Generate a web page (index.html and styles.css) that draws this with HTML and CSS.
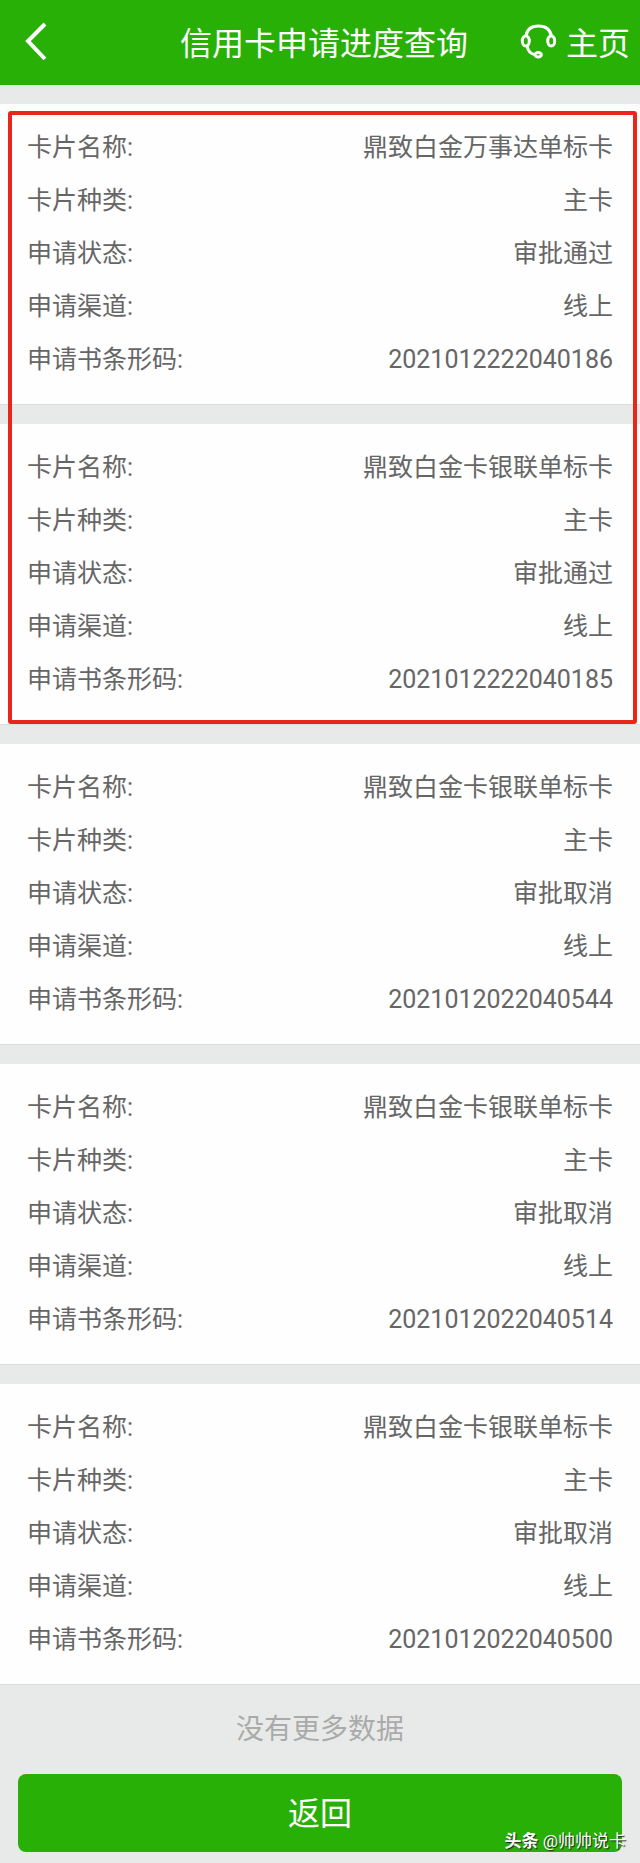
FILE: index.html
```html
<!DOCTYPE html>
<html lang="zh-CN">
<head>
    <meta charset="UTF-8">
    <meta name="viewport" content="width=device-width, initial-scale=1.0">
    <title>信用卡申请进度查询</title>
    <link rel="stylesheet" href="styles.css">
</head>
<body>
    <header class="header">
        <button class="back" type="button" aria-label="后退">
            <svg width="24" height="40" viewBox="0 0 24 40" fill="none" stroke="currentColor" stroke-width="4">
                <path d="M21 3 L4 20 L21 38"/>
            </svg>
        </button>
        <h1>信用卡申请进度查询</h1>
        <a class="home" href="#">
            <svg width="36" height="36" viewBox="0 0 36 36" fill="none" stroke="currentColor" stroke-width="3">
                <path d="M6 13 C7 6 12 3 18.5 3 C25 3 30 6 31.5 13"/>
                <ellipse cx="5.8" cy="18" rx="3.5" ry="5"/>
                <ellipse cx="31.2" cy="18" rx="3.5" ry="5"/>
                <path d="M7 23 C8 28 10 31 15 31.5"/>
                <ellipse cx="18.2" cy="31.8" rx="3.2" ry="2.2"/>
            </svg>
            主页
        </a>
    </header>

    <main class="list">
        <div class="marked">
            <dl class="card">
                <div class="row"><dt>卡片名称:</dt><dd>鼎致白金万事达单标卡</dd></div>
                <div class="row"><dt>卡片种类:</dt><dd>主卡</dd></div>
                <div class="row"><dt>申请状态:</dt><dd>审批通过</dd></div>
                <div class="row"><dt>申请渠道:</dt><dd>线上</dd></div>
                <div class="row"><dt>申请书条形码:</dt><dd>2021012222040186</dd></div>
            </dl>
            <dl class="card">
                <div class="row"><dt>卡片名称:</dt><dd>鼎致白金卡银联单标卡</dd></div>
                <div class="row"><dt>卡片种类:</dt><dd>主卡</dd></div>
                <div class="row"><dt>申请状态:</dt><dd>审批通过</dd></div>
                <div class="row"><dt>申请渠道:</dt><dd>线上</dd></div>
                <div class="row"><dt>申请书条形码:</dt><dd>2021012222040185</dd></div>
            </dl>
        </div>
        <dl class="card">
            <div class="row"><dt>卡片名称:</dt><dd>鼎致白金卡银联单标卡</dd></div>
            <div class="row"><dt>卡片种类:</dt><dd>主卡</dd></div>
            <div class="row"><dt>申请状态:</dt><dd>审批取消</dd></div>
            <div class="row"><dt>申请渠道:</dt><dd>线上</dd></div>
            <div class="row"><dt>申请书条形码:</dt><dd>2021012022040544</dd></div>
        </dl>
        <dl class="card">
            <div class="row"><dt>卡片名称:</dt><dd>鼎致白金卡银联单标卡</dd></div>
            <div class="row"><dt>卡片种类:</dt><dd>主卡</dd></div>
            <div class="row"><dt>申请状态:</dt><dd>审批取消</dd></div>
            <div class="row"><dt>申请渠道:</dt><dd>线上</dd></div>
            <div class="row"><dt>申请书条形码:</dt><dd>2021012022040514</dd></div>
        </dl>
        <dl class="card">
            <div class="row"><dt>卡片名称:</dt><dd>鼎致白金卡银联单标卡</dd></div>
            <div class="row"><dt>卡片种类:</dt><dd>主卡</dd></div>
            <div class="row"><dt>申请状态:</dt><dd>审批取消</dd></div>
            <div class="row"><dt>申请渠道:</dt><dd>线上</dd></div>
            <div class="row"><dt>申请书条形码:</dt><dd>2021012022040500</dd></div>
        </dl>
    </main>

    <footer class="footer">
        <p class="no-more">没有更多数据</p>
        <button class="return" type="button">返回</button>
        <div class="watermark"><b>头条</b> @帅帅说卡</div>
    </footer>
</body>
</html>
```
FILE: styles.css
```css
* {
    box-sizing: border-box;
}
body {
    margin: 0;
    background-color: #e8eae9;
    color: #666;
    font-family: Roboto, "Noto Sans CJK SC", sans-serif;
    font-size: 25px;
}
button {
    border: none;
    font-family: inherit;
    cursor: pointer;
}
.header {
    display: grid;
    grid-template-columns: 1fr auto 1fr;
    align-items: center;
    height: 85px;
    padding: 0 10px 4px 18px;
    background-color: #28b006;
    color: #fff;
    font-size: 32px;
}
.header h1 {
    margin: 0;
    font-size: 32px;
    font-weight: 400;
}
.back {
    display: flex;
    justify-self: start;
    padding: 0 6px;
    background: none;
    color: inherit;
}
.home {
    display: flex;
    justify-self: end;
    align-items: center;
    gap: 10px;
    color: inherit;
    text-decoration: none;
}
.list,
.marked {
    display: flex;
    flex-direction: column;
    gap: 19px;
}
.list {
    padding-top: 19px;
}
.marked {
    position: relative;
}
/* 已通过的两张卡外面的红框 */
.marked::after {
    content: "";
    position: absolute;
    top: 7px;
    right: 3px;
    bottom: 1px;
    left: 8px;
    border: 4px solid #e8261c;
    border-radius: 3px;
    pointer-events: none;
}
.card {
    margin: 0;
    padding: 17px 27px 18px;
    background-color: #fefefe;
    border-bottom: 1px solid #dcdedd;
}
.row {
    display: flex;
    justify-content: space-between;
    line-height: 53px;
}
.row dd {
    margin: 0;
}
.footer {
    position: relative;
    padding: 20px 18px 11px;
}
.no-more {
    margin: 0 0 19px;
    color: #aaa;
    font-size: 28px;
    line-height: 50px;
    text-align: center;
}
.return {
    display: block;
    width: 100%;
    height: 78px;
    padding: 0 0 4px;
    border-radius: 8px;
    background-color: #28b006;
    color: #fff;
    font-size: 32px;
}
.watermark {
    position: absolute;
    right: 14px;
    bottom: 10px;
    color: #fff;
    font-size: 17px;
    line-height: 24px;
    text-shadow: 1px 1px 1px #222;
}
```
